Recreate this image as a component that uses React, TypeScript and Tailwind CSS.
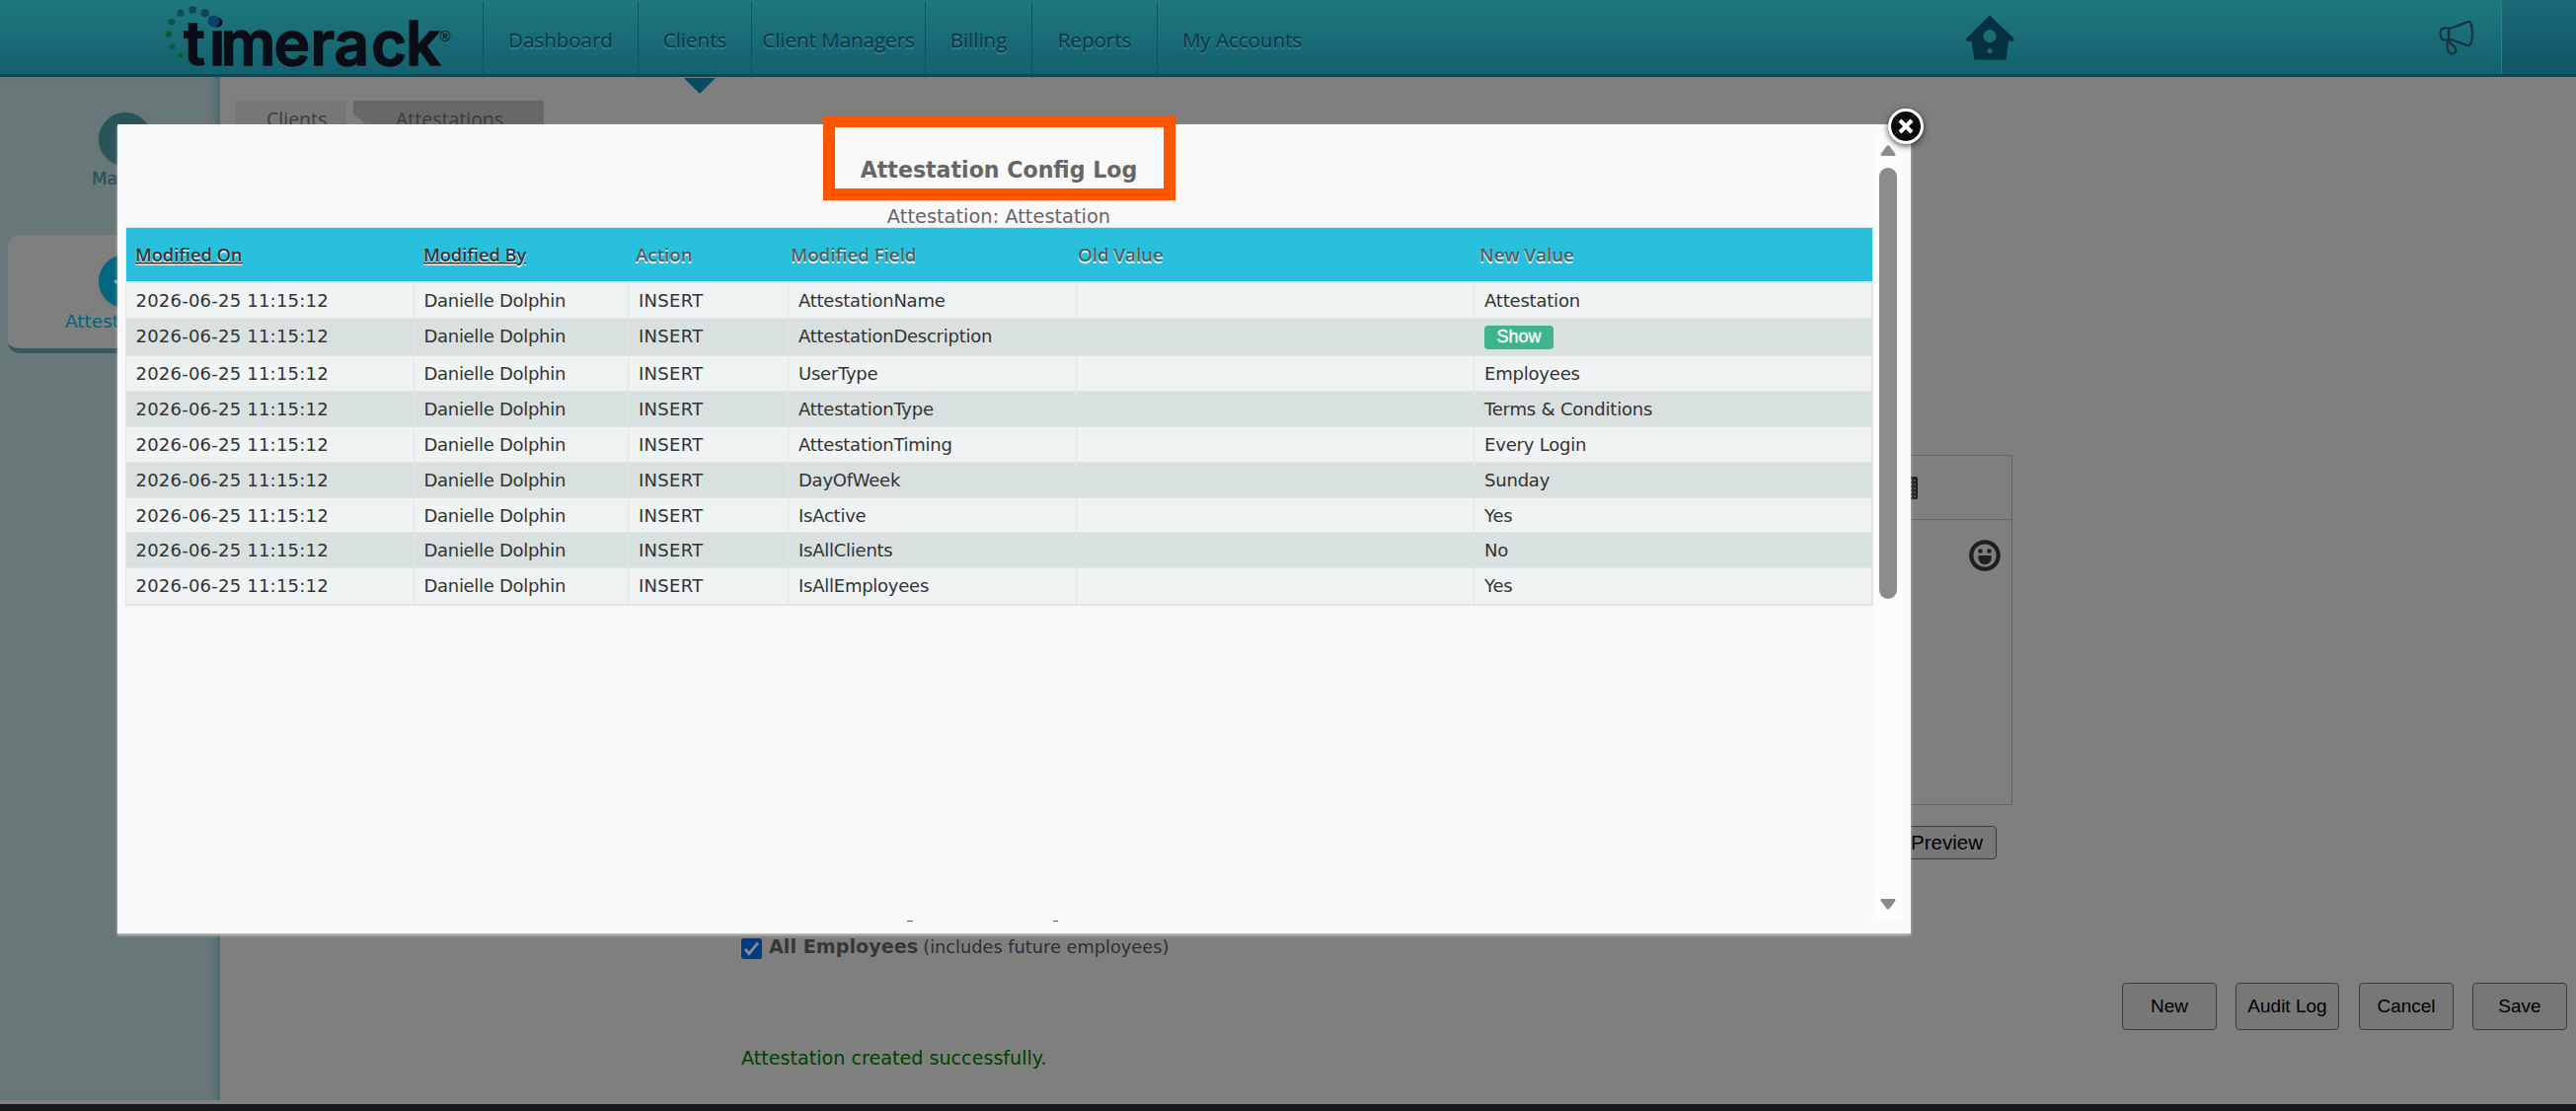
import type { ReactNode } from "react";
import { clsx } from "clsx";

const navLinks = [
  { label: "Dashboard", width: "w-[157px]" },
  { label: "Clients", width: "w-[115px]", active: true },
  { label: "Client Managers", width: "w-[176px]" },
  { label: "Billing", width: "w-[108px]" },
  { label: "Reports", width: "w-[127px]" },
  { label: "My Accounts", width: "w-[172px]" },
];

const logoDots = [
  { cx: 183, cy: 56.3, r: 2.5, fill: "#07602f" },
  { cx: 174.3, cy: 47.3, r: 2.8, fill: "#0b5e38" },
  { cx: 171, cy: 34.7, r: 3.1, fill: "#0d5a40" },
  { cx: 174, cy: 22.3, r: 3.3, fill: "#0e5549" },
  { cx: 183, cy: 13.2, r: 3.6, fill: "#0e5052" },
  { cx: 195.3, cy: 9.8, r: 3.9, fill: "#0e4b5a" },
  { cx: 207.6, cy: 13.2, r: 4.1, fill: "#0d4663" },
  { cx: 216.4, cy: 21.5, r: 6, fill: "#0c4070" },
];

const columns = [
  { label: "Modified On", sortable: true, pad: "pl-[9px]" },
  { label: "Modified By", sortable: true, pad: "pl-[9px]" },
  { label: "Action", pad: "pl-[7px]" },
  { label: "Modified Field", pad: "pl-[2px]" },
  { label: "Old Value", pad: "pl-px" },
  { label: "New Value", pad: "pl-[5px]" },
];

const rows = [
  { field: "AttestationName", value: "Attestation", height: "h-9" },
  { field: "AttestationDescription", value: null, height: "h-[38px]" },
  { field: "UserType", value: "Employees", height: "h-9" },
  { field: "AttestationType", value: "Terms & Conditions", height: "h-9" },
  { field: "AttestationTiming", value: "Every Login", height: "h-9" },
  { field: "DayOfWeek", value: "Sunday", height: "h-9" },
  { field: "IsActive", value: "Yes", height: "h-[35px]" },
  { field: "IsAllClients", value: "No", height: "h-9" },
  { field: "IsAllEmployees", value: "Yes", height: "h-9" },
];

const gridCols = "grid grid-cols-[292px_217px_162px_292px_403px_1fr]";

function Logo() {
  return (
    <svg width="489" height="84" className="shrink-0 overflow-visible" aria-label="timerack">
      <text
        x="186 212 223.5 277.500 314.500 338.500 376 411"
        y="66"
        fill="#0a0d15"
        stroke="#0a0d15"
        strokeWidth="1.4"
        className="font-['Inter'] text-[62px] font-semibold"
      >
        timerack
      </text>
      {logoDots.map((d) => (
        <circle key={d.cx + d.cy} {...d} />
      ))}
      <text x="445.5" y="42" fill="#0a1a24" className="font-['Liberation_Sans'] text-[15px] font-bold">
        ®
      </text>
    </svg>
  );
}

function BirdhouseIcon() {
  return (
    <svg width="50" height="48" viewBox="0 0 50 48">
      <path
        fill="#04303f"
        fillRule="evenodd"
        d="M25 1.5 49 24.5q1.6 2.4-.8 3.4-2 .8-4-1.2L41.500 46.500H9.500L6.500 26.700q-2.200 2.200-4.200 1.200Q.2 26.700 1.500 24.500ZM25 16a6.600 6.600 0 1 0 .01 0ZM25 35a2.600 2.600 0 1 0 .01 0Z"
      />
    </svg>
  );
}

function MegaphoneIcon() {
  return (
    <svg
      width="38"
      height="38"
      viewBox="0 0 38 38"
      fill="none"
      stroke="#17323e"
      strokeWidth="2.2"
      strokeLinejoin="round"
      strokeLinecap="round"
    >
      <path d="M11 10.500 31.500 2.800Q33 2.500 33.700 5q2.300 9 .6 17-1.300 5.500-3.600 5.300L11 20.500Z" />
      <path d="M11 9.500H6.500Q2.500 10 2.500 15q0 6 4 6.500H11ZM10 22q-1.500 8 1.500 12 2 2.500 5 1 3.500-2.500 0-7Q12 25 11 21.500" />
    </svg>
  );
}

function Header() {
  return (
    <header className="relative flex h-[78px] w-full border-b-[3px] border-[#044a5a] bg-linear-to-b from-[#1f787c] to-[#14616f]">
      <Logo />
      {navLinks.map((link) => (
        <a
          key={link.label}
          className={clsx(
            "relative mt-0.5 flex h-[77px] shrink-0 justify-center border-l border-[#0b5563] pt-[9px] font-['Open_Sans'] text-[20.500px] leading-[58px] whitespace-nowrap text-[#06384c] [text-shadow:0_2px_1px_#4b7f88]",
            link.width
          )}
        >
          {link.label}
          {link.active ? (
            <span className="absolute top-[77px] left-[46px] size-0 border-x-[16px] border-t-[16px] border-x-transparent border-t-[#054c60]" />
          ) : null}
        </a>
      ))}
      <div className="grow pt-3.5 pl-[647px]">
        <BirdhouseIcon />
      </div>
      <div className="pt-[19px] pr-[26px]">
        <MegaphoneIcon />
      </div>
      <div className="w-[76px] border-l border-[#2d7f8a] bg-linear-to-b from-[#1b6a75] to-[#115468]" />
    </header>
  );
}

function SideIcon({ tone, children }: { tone: string; children: ReactNode }) {
  return (
    <span className={clsx("flex size-[54px] items-center justify-center rounded-full shadow-sm", tone)}>
      {children}
    </span>
  );
}

function Sidebar() {
  return (
    <aside className="flex h-[1037px] w-[223px] shrink-0 flex-col bg-[#687777] pt-9 shadow-[inset_-9px_0_8px_-6px_#456469]">
      <div className="ml-2 flex h-[124px] flex-col pl-[92px] text-[18px] text-[#27545a]">
        <SideIcon tone="bg-[#2b5458]">
          <svg width="30" height="34" viewBox="0 0 30 34" fill="#7e9495">
            <circle cx="17" cy="8" r="6" />
            <path d="M8 34q0-15 9-15t11 15Z" />
          </svg>
        </SideIcon>
        <span className="-mt-px -ml-[7px] leading-7 font-medium [-webkit-text-stroke:0.4px_#27545a]">Ma</span>
      </div>
      <div className="ml-2 flex h-[120px] flex-col rounded-xl border-b-[5px] border-[#34595e] bg-[#7f7f7f] pt-[20px] pl-[92px] text-[18.500px] text-[#00657c]">
        <SideIcon tone="bg-[#01667e]">
          <svg width="34" height="30" viewBox="0 0 34 30" fill="none" stroke="#7e9fa6" strokeWidth="3">
            <path d="M6 14l8 8L32 4" />
          </svg>
        </SideIcon>
        <span className="-ml-[34px] leading-7">Attest</span>
      </div>
    </aside>
  );
}

function Breadcrumbs() {
  return (
    <nav className="flex h-12 font-['Open_Sans'] text-[19.500px] leading-[38px] text-[#3c3c3c]">
      <span className="h-10 w-28 bg-[#777] pl-[31px]">Clients</span>
      <span className="ml-[7px] h-10 w-[193px] bg-[#686868] pl-[43px] [clip-path:polygon(0_0,100%_0,100%_100%,0_100%,0_38px,11px_22px,0_14px)]">
        Attestations
      </span>
    </nav>
  );
}

function FormButton({ className, children }: { className: string; children: ReactNode }) {
  return (
    <button
      className={clsx(
        "flex items-center justify-center rounded-[4px] border border-[#3b3b3b] bg-[#777] font-['Liberation_Sans'] text-black",
        className
      )}
    >
      {children}
    </button>
  );
}

function Editor() {
  return (
    <div className="ml-[512px] h-[355px] w-[1288px] border border-[#666]">
      <div className="flex h-[65px] items-center border-b border-[#666] pl-[1167px]">
        <svg width="24" height="23" viewBox="0 0 24 23">
          <rect width="24" height="23" rx="2" fill="#202020" />
          <path d="M17.500 3v18M21 3v18" stroke="#7f7f7f" strokeWidth="1" strokeDasharray="2 2" />
        </svg>
      </div>
      <div className="flex justify-end pt-5 pr-[11px]">
        <svg width="32" height="32" viewBox="0 0 32 32" fill="#1f1f1f">
          <circle cx="16" cy="16" r="13.700" fill="none" stroke="#1f1f1f" strokeWidth="4.200" />
          <circle cx="11.500" cy="11.500" r="2.300" />
          <circle cx="20.500" cy="11.500" r="2.300" />
          <path d="M9.500 16h13.200v2.500a6.600 6.600 0 0 1-13.200 0Z" />
        </svg>
      </div>
    </div>
  );
}

function Page() {
  return (
    <main className="flex grow flex-col pt-6 pl-4">
      <Breadcrumbs />
      <div className="h-[311px]" />
      <Editor />
      <FormButton className="mt-[21px] ml-[1683px] h-[34px] w-[101px] justify-end pr-[13px] text-[20.500px]">
        Preview
      </FormButton>
      <div className="mt-[76px] ml-[512px] flex h-8 items-center">
        <svg width="21" height="21" viewBox="0 0 21 21" className="mt-[-3px]">
          <rect width="21" height="21" rx="2.500" fill="#003d80" />
          <path d="M4 11l4 4.500L17 4.500" fill="none" stroke="#8c8c8c" strokeWidth="2.800" />
        </svg>
        <span className="mt-[-6px] ml-[7px] text-[19.200px] font-bold text-[#373737]">All Employees</span>
        <span className="mt-[-5px] ml-[5px] text-[17.750px] text-[#2f2f2f]">(includes future employees)</span>
      </div>
      <div className="mt-[17px] mr-[9px] flex justify-end">
        <FormButton className="h-12 w-24 text-[19px]">New</FormButton>
        <FormButton className="ml-[19px] h-12 w-[105px] text-[19px]">Audit Log</FormButton>
        <FormButton className="ml-5 h-12 w-24 text-[19px]">Cancel</FormButton>
        <FormButton className="ml-[19px] h-12 w-24 text-[19px]">Save</FormButton>
      </div>
      <p className="mt-[15px] ml-[512px] text-[19.150px] leading-7 text-[#004200]">Attestation created successfully.</p>
    </main>
  );
}

function LogTable() {
  return (
    <div className="ml-2 w-[1771px] border border-r-2 border-b-2 border-[#e4e6e6] text-[18px] text-[#333]">
      <div className={clsx(gridCols, "-mr-px h-[54px] bg-[#29c0dd] font-['Open_Sans'] font-semibold")}>
        {columns.map((col) => (
          <div
            key={col.label}
            className={clsx(
              "whitespace-nowrap [text-shadow:0_2px_1px_#fff]",
              col.pad,
              col.sortable
                ? "text-[18.200px] leading-[54px] text-[#333] underline"
                : "text-[18.700px] leading-[53px] text-[#4d5f64]"
            )}
          >
            {col.label}
          </div>
        ))}
      </div>
      <div className="h-0.5 bg-[#e4e6e6]" />
      {rows.map((row, i) => (
        <div
          key={row.field}
          className={clsx(
            gridCols,
            "border-b border-[#e4e6e6] leading-[36.500px] last:border-b-0 [&>div]:h-full [&>div]:border-r [&>div]:border-[#e2e5e5] [&>div:last-child]:border-r-0",
            row.height,
            i % 2 ? "bg-[#d8e0e0]" : "bg-[#eff3f4]"
          )}
        >
          <div className="pl-[9.500px] tracking-[0.22px]">2026-06-25 11:15:12</div>
          <div className="pl-[9.500px] tracking-[-0.3px]">Danielle Dolphin</div>
          <div className="pl-2.5 tracking-[0.3px]">INSERT</div>
          <div className="pl-2.5 tracking-[-0.25px]">{row.field}</div>
          <div />
          <div className="pl-2.5 tracking-[-0.2px]">
            {row.value ?? (
              <span className="relative top-[7px] flex h-6 w-[70px] justify-center rounded-[4px] bg-[#3eb48c] font-['Liberation_Sans'] text-[18px] leading-[22px] tracking-normal text-white [-webkit-text-stroke:0.3px_#fff]">
                Show
              </span>
            )}
          </div>
        </div>
      ))}
    </div>
  );
}

function Scrollbar() {
  return (
    <div className="absolute top-2 right-2 flex h-[800px] w-[30px] flex-col items-center bg-[#fcfcfc] pt-[13px] pb-3">
      <svg width="16" height="11" viewBox="0 0 16 11" fill="#8b8b8b" className="shrink-0">
        <path d="M6.200 1.500Q8-.8 9.800 1.500L15.300 9q.8 2-1.300 2H2Q-.1 11 .7 9Z" />
      </svg>
      <div className="mt-3 h-[437px] w-[18px] shrink-0 rounded-full bg-[#8b8b8b]" />
      <svg width="16" height="11" viewBox="0 0 16 11" fill="#8b8b8b" className="mt-auto shrink-0 rotate-180">
        <path d="M6.200 1.500Q8-.8 9.800 1.500L15.300 9q.8 2-1.300 2H2Q-.1 11 .7 9Z" />
      </svg>
    </div>
  );
}

function LogDialog() {
  return (
    <div
      role="dialog"
      className="absolute top-[126px] left-[119px] h-[820px] w-[1817px] bg-[#f9f9f9] shadow-[0_2px_3px_#c4c4c4]"
    >
      <div className="flex h-[104px] w-[1786px] flex-col items-center pt-[31px] text-[#666]">
        <h1 className="text-[22.100px] leading-[30px] font-bold">Attestation Config Log</h1>
        <p className="mt-[19px] text-[19.400px] leading-7">Attestation: Attestation</p>
      </div>
      <LogTable />
      <Scrollbar />
      {/* tails of the form line that show through under the dialog frame */}
      <span className="absolute top-[807px] left-[800px] h-px w-1.5 bg-[#555]" />
      <span className="absolute top-[807px] left-[948px] h-px w-[5px] bg-[#555]" />
      <div className="absolute top-[-9px] left-[715px] h-[86px] w-[357px] border-12 border-[#ff5500]" />
      <button
        aria-label="Close"
        className="absolute top-[-16px] right-[-13px] flex size-9 items-center justify-center rounded-full border-3 border-white bg-[#0b0b0b] shadow-[0_2px_6px_#000a]"
      >
        <svg width="16" height="16" viewBox="0 0 16 16" stroke="#fff" strokeWidth="4.200">
          <path d="M2 2l12 12M14 2L2 14" />
        </svg>
      </button>
    </div>
  );
}

export default function App() {
  return (
    <div className="relative flex h-[1126px] w-[2610px] flex-col overflow-hidden bg-[#7f7f7f] font-['DejaVu_Sans',sans-serif]">
      <Header />
      <div className="flex h-[1041px]">
        <Sidebar />
        <Page />
      </div>
      <div className="h-[7px] bg-[#14171b]" />
      <LogDialog />
    </div>
  );
}
